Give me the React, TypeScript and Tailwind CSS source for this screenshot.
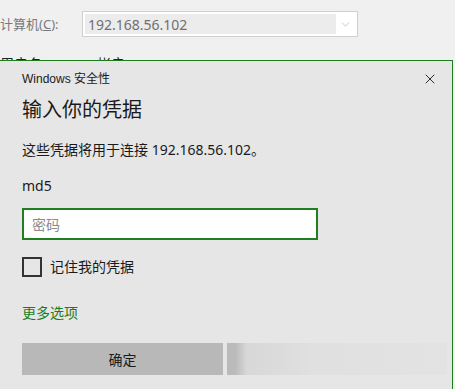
import { X, ChevronDown } from 'lucide-react'

const font = { fontFamily: '"Noto Sans", "Noto Sans CJK SC", sans-serif' }

// Background window row: label + combobox
function ComputerRow() {
  return (
    <div className="flex items-center h-[26px] mt-[11px]">
      <span className="w-[82px] text-[13px] text-[#7a7a7a] leading-none">
        计算机(<span className="underline">C</span>):
      </span>
      <div className="w-[276px] h-[26px] border border-[#cfcfcf] bg-white flex items-center p-[2px]">
        <div className="flex-1 h-full bg-[#ececec] flex items-center pl-[3px] text-[14px] text-[#707070]">
          192.168.56.102
        </div>
        <div className="w-[19px] flex justify-center">
          <ChevronDown size={13} strokeWidth={1} className="text-[#9a9a9a]" />
        </div>
      </div>
    </div>
  )
}

function CredentialDialog() {
  return (
    <div className="absolute top-[60px] left-[-1px] w-[454px] h-[340px] border border-[#1c7d1c] bg-[#e6e6e6] text-[#1a1a1a]">
      <div className="pl-[22px] pr-[5px]">
        <div className="flex items-center justify-between h-[16px] mt-[10px]">
          <span className="text-[12px] leading-none" style={{ fontFamily: '"Liberation Sans", "Noto Sans CJK SC", sans-serif' }}>
            Windows 安全性
          </span>
          <X size={16} strokeWidth={1.3} className="text-[#111] mr-[9px]" />
        </div>
        <div className="text-[20px] leading-none mt-[13px]">输入你的凭据</div>
        <div className="text-[14px] leading-none mt-[23px]">这些凭据将用于连接 192.168.56.102。</div>
        <div className="text-[14px] leading-none mt-[22px]">md5</div>
        <div className="mt-[15px] w-[296px] h-[32px] border-2 border-[#1f7e1f] bg-white flex items-center pl-[8px] text-[14px] text-[#8a8a8a]">
          密码
        </div>
        <div className="flex items-center mt-[17px] gap-[8px]">
          <div className="w-[20px] h-[20px] border-2 border-[#333]" />
          <span className="text-[14px] leading-none">记住我的凭据</span>
        </div>
        <div className="text-[14px] leading-none mt-[29px] text-[#1c7d1c]">更多选项</div>
        <div className="flex gap-[4px] mt-[23px]">
          <div className="w-[201px] h-[32px] shrink-0 bg-[#b8b8b8] flex items-center justify-center text-[14px]">
            确定
          </div>
          <div className="w-[220px] h-[32px] shrink-0 bg-[linear-gradient(90deg,#b9b9b9_0%,#bcbcbc_4%,#d8d8d8_9%,#e0e0e0_40%,#e3e3e3_100%)]" />
        </div>
      </div>
    </div>
  )
}

export default function App() {
  return (
    <div className="relative w-[455px] h-[389px] overflow-hidden bg-[#f0f0f0]" style={font}>
      <ComputerRow />
      <div className="flex mt-[20px] text-[14px] text-[#222] leading-none">
        <span className="w-[97px]">用户名:</span>
        <span>帐户</span>
      </div>
      <CredentialDialog />
    </div>
  )
}
